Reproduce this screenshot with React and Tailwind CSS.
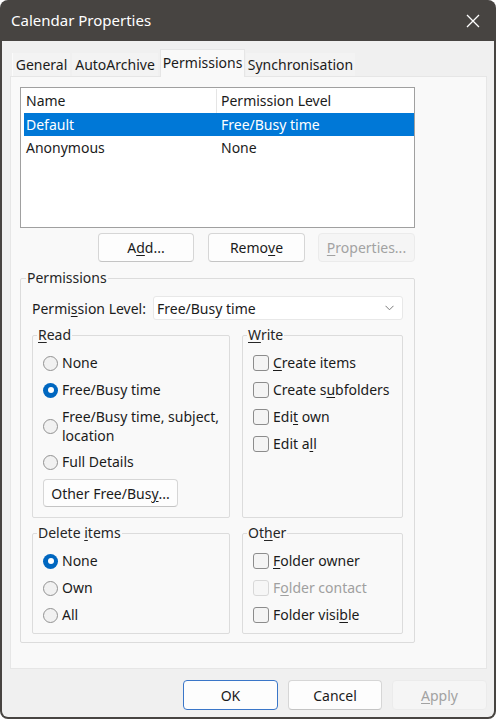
import React from "react";

const font = "font-['Noto_Sans','Open_Sans',sans-serif]";

function K({ children }) {
  return <span className="underline underline-offset-[2px] decoration-[1px]">{children}</span>;
}

function Btn({ w, disabled, primary, children }) {
  let cls = "flex items-center justify-center rounded-[4px] border text-[14px] ";
  if (disabled) cls += "bg-[#f5f5f5] border-[#ebebeb] text-[#a2a2a2]";
  else if (primary) cls += "bg-[#fdfdfd] border-[#3a76c8] text-[#1b1b1b]";
  else cls += "bg-[#fdfdfd] border-[#d6d6d6] border-b-[#c4c4c4] text-[#1b1b1b]";
  return <div className={cls + " " + w}>{children}</div>;
}

function Radio({ checked, children, twoLine }) {
  return (
    <div className="flex items-center gap-[4px]">
      {checked ? (
        <span className="w-[15px] h-[15px] rounded-full bg-[#0067c0] flex items-center justify-center shrink-0">
          <span className="w-[6px] h-[6px] rounded-full bg-white" />
        </span>
      ) : (
        <span className="w-[15px] h-[15px] rounded-full border border-[#929292] bg-[#f1f1f1] shrink-0" />
      )}
      <span className={twoLine ? "leading-[19px]" : "leading-[20px]"}>{children}</span>
    </div>
  );
}

function Check({ disabled, children }) {
  return (
    <div className={"flex items-center gap-[4px] leading-[20px] " + (disabled ? "text-[#a0a0a0]" : "")}>
      <span
        className={
          "w-[16px] h-[16px] rounded-[3px] border shrink-0 " +
          (disabled ? "border-[#d8d8d8] bg-[#f6f6f6]" : "border-[#8c8c8c] bg-[#f4f4f4]")
        }
      />
      <span>{children}</span>
    </div>
  );
}

function Group({ label, className, children }) {
  return (
    <fieldset className={"border border-[#dcdcdc] rounded-[2px] " + className}>
      <legend className="-ml-[6px] px-[1px] leading-[20px] text-[#262626]">{label}</legend>
      {children}
    </fieldset>
  );
}

export default function App() {
  return (
    <div className={"w-[496px] h-[719px] bg-white text-[14px] text-[#1b1b1b] " + font}>
      <div className="w-full h-full bg-[#474441] rounded-[8px] px-[2px] pb-[2px] flex flex-col overflow-hidden">
        {/* title bar */}
        <div className="h-[41px] flex items-center justify-between pl-[9px] pr-[14px] shrink-0">
          <span className="text-white text-[15px]">Calendar Properties</span>
          <svg width="14" height="14" viewBox="0 0 14 14">
            <path d="M1 1 L13 13 M13 1 L1 13" stroke="#ffffff" strokeWidth="1.3" />
          </svg>
        </div>

        <div className="flex-1 bg-[#f0f0f0] rounded-b-[6px] flex flex-col">
          {/* tabs */}
          <div className="flex items-end pt-[7px] pl-[10px] h-[35px]">
            <div className="w-[58px] h-[23px] flex items-center justify-center bg-[#f3f3f3] border-l border-[#fbfbfb]">General</div>
            <div className="ml-[2px] w-[86px] h-[23px] flex items-center justify-center bg-[#f3f3f3]">AutoArchive</div>
            <div className="relative z-10 ml-[2px] w-[85px] h-[28px] -mb-[1px] flex items-center justify-center bg-[#f9f9f9] border border-b-0 border-[#e6e6e6] pb-[2px]">
              Permissions
            </div>
            <div className="ml-[1px] w-[109px] h-[23px] flex items-center justify-center bg-[#f3f3f3]">Synchronisation</div>
          </div>

          {/* panel */}
          <div className="ml-[8px] w-[477px] h-[593px] bg-[#f9f9f9] border border-[#e6e6e6] pl-[9px] pt-[10px]">
            {/* list */}
            <div className="w-[395px] h-[141px] bg-white border border-[#a0a0a0]">
              <div className="flex h-[25px] items-center ml-[3px]">
                <div className="w-[192px] pl-[2px]">Name</div>
                <div className="w-[1px] h-[24px] bg-[#e5e5e5]" />
                <div className="pl-[4px]">Permission Level</div>
              </div>
              <div className="flex h-[23px] items-center ml-[3px] w-[390px] bg-[#0078d7] text-white">
                <div className="w-[193px] pl-[2px]">Default</div>
                <div className="pl-[4px]">Free/Busy time</div>
              </div>
              <div className="flex h-[23px] items-center ml-[3px]">
                <div className="w-[193px] pl-[2px]">Anonymous</div>
                <div className="pl-[4px]">None</div>
              </div>
            </div>

            {/* list buttons */}
            <div className="w-[395px] flex justify-end mt-[5px] h-[29px]">
              <Btn w="w-[96px]">
                A<K>d</K>d...
              </Btn>
              <div className="w-[14px]" />
              <Btn w="w-[97px]">
                Remo<K>v</K>e
              </Btn>
              <div className="w-[13px]" />
              <Btn w="w-[97px]" disabled>
                <K>P</K>roperties...
              </Btn>
            </div>

            {/* permissions group */}
            <Group label="Permissions" className="w-[395px] mt-[6px] pl-[11px] pr-[10px] pb-[8px]">
              <div className="flex items-center mt-[8px] h-[24px]">
                <div className="w-[121px]">
                  Permi<K>s</K>sion Level:
                </div>
                <div className="w-[250px] h-[24px] bg-white border border-[#e8e8e8] rounded-[3px] flex items-center justify-between pl-[3px] pr-[8px]">
                  <span>Free/Busy time</span>
                  <svg width="9" height="6" viewBox="0 0 9 6">
                    <path d="M0.5 0.8 L4.5 4.8 L8.5 0.8" fill="none" stroke="#7a7a7a" strokeWidth="1" />
                  </svg>
                </div>
              </div>

              <div className="flex mt-[5px] gap-[12px]">
                <Group
                  label={
                    <>
                      <K>R</K>ead
                    </>
                  }
                  className="w-[198px] pl-[10px] pb-[10px]"
                >
                  <div className="flex flex-col gap-[7px] pt-[8px]">
                    <Radio>None</Radio>
                    <Radio checked>Free/Busy time</Radio>
                    <Radio twoLine>
                      Free/Busy time, subject,
                      <br />
                      location
                    </Radio>
                    <Radio>Full Details</Radio>
                    <Btn w="w-[135px] h-[28px]">
                      Other Free/Bus<K>y</K>...
                    </Btn>
                  </div>
                </Group>
                <Group
                  label={
                    <>
                      <K>W</K>rite
                    </>
                  }
                  className="w-[161px] pl-[10px]"
                >
                  <div className="flex flex-col gap-[7px] pt-[8px]">
                    <Check>
                      <K>C</K>reate items
                    </Check>
                    <Check>
                      Create s<K>u</K>bfolders
                    </Check>
                    <Check>
                      Edi<K>t</K> own
                    </Check>
                    <Check>
                      Edit a<K>l</K>l
                    </Check>
                  </div>
                </Group>
              </div>

              <div className="flex mt-[5px] gap-[12px]">
                <Group
                  label={
                    <>
                      Delete <K>i</K>tems
                    </>
                  }
                  className="w-[198px] pl-[10px] pb-[8px]"
                >
                  <div className="flex flex-col gap-[7px] pt-[8px]">
                    <Radio checked>None</Radio>
                    <Radio>Own</Radio>
                    <Radio>All</Radio>
                  </div>
                </Group>
                <Group
                  label={
                    <>
                      Ot<K>h</K>er
                    </>
                  }
                  className="w-[161px] pl-[10px] pb-[8px]"
                >
                  <div className="flex flex-col gap-[7px] pt-[8px]">
                    <Check>
                      <K>F</K>older owner
                    </Check>
                    <Check disabled>
                      F<K>o</K>lder contact
                    </Check>
                    <Check>
                      Folder visi<K>b</K>le
                    </Check>
                  </div>
                </Group>
              </div>
            </Group>
          </div>

          {/* dialog buttons */}
          <div className="flex justify-end pr-[7px] mt-[11px] h-[30px] gap-[10px]">
            <Btn w="w-[95px]" primary>OK</Btn>
            <Btn w="w-[94px]">Cancel</Btn>
            <Btn w="w-[95px]" disabled>
              <K>A</K>pply
            </Btn>
          </div>
        </div>
      </div>
    </div>
  );
}
